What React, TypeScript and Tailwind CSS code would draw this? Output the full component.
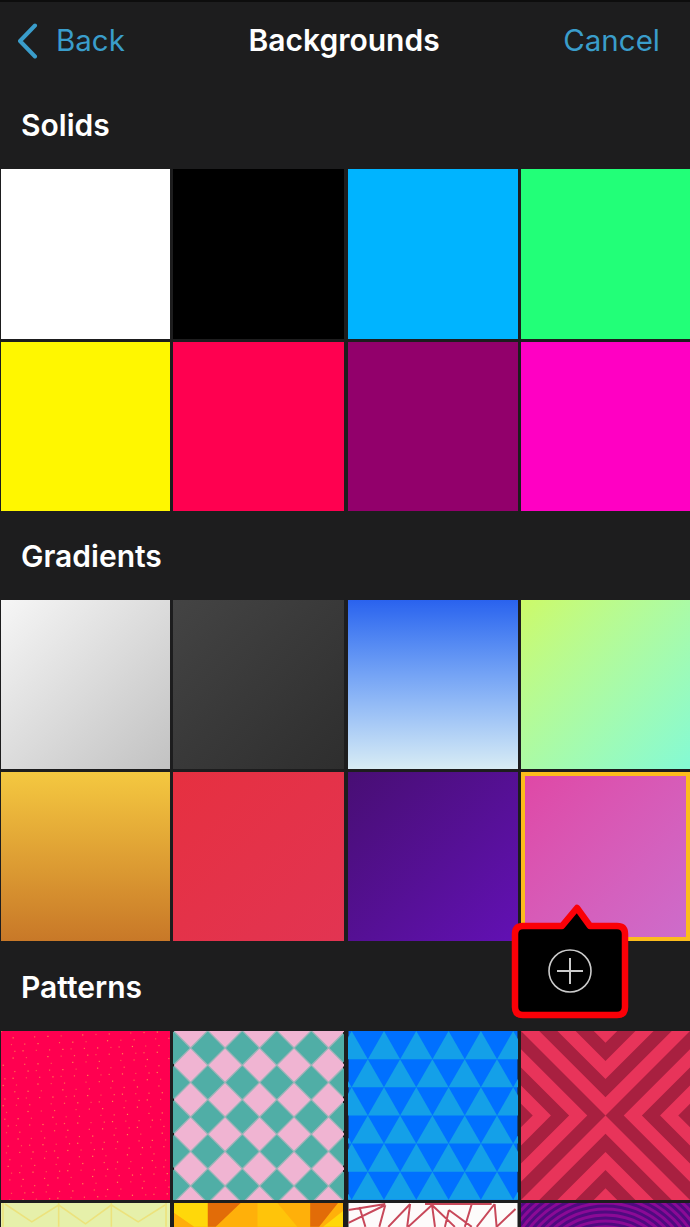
const FONT = "font-['Inter','Liberation_Sans',sans-serif]";

function Dots() {
  // scattered flecks on the red tile
  const dots = [];
  for (let i = 0; i < 300; i++) {
    const x = (i * 0.7549 * 170) % 170;
    const y = (i * 0.5698 * 170) % 170;
    dots.push(<rect key={i} x={x} y={y} width="1.2" height="1.2" fill="#ff9050" opacity={0.55 + (i % 3) * 0.2} />);
  }
  return (
    <svg viewBox="0 0 170 170" className="block w-full h-full">
      <rect width="170" height="170" fill="#ff0050" />
      {dots}
    </svg>
  );
}

function Diamonds() {
  const p = 34.7;
  const cells = [];
  for (let r = -1; r < 7; r++) {
    for (let c = -1; c < 7; c++) {
      const x = c * p - 0.7;
      const y = r * p + 17;
      cells.push(<polygon key={`t${r}${c}`} points={`${x},${y - 16.4} ${x + 16.4},${y} ${x},${y + 16.4} ${x - 16.4},${y}`} fill="#50aea6" />);
      const px = x + p / 2;
      const py = y + p / 2;
      cells.push(<polygon key={`p${r}${c}`} points={`${px},${py - 16.4} ${px + 16.4},${py} ${px},${py + 16.4} ${px - 16.4},${py}`} fill="#f0b4d2" />);
    }
  }
  return (
    <svg viewBox="0 0 170 170" className="block w-full h-full">
      <rect width="170" height="170" fill="#9db4b8" />
      {cells}
    </svg>
  );
}

function Triangles() {
  const w = 32.5;
  const h = 28.3;
  const tris = [];
  for (let r = 0; r < 6; r++) {
    const off = r % 2 === 0 ? 3.2 : 19.4;
    for (let c = -1; c < 7; c++) {
      const x = off + c * w;
      const y = r * h;
      tris.push(<polygon key={`${r}-${c}`} points={`${x},${y} ${x + w / 2},${y + h} ${x - w / 2},${y + h}`} fill="#14a0e8" />);
    }
  }
  return (
    <svg viewBox="0 0 170 170" className="block w-full h-full">
      <rect width="170" height="170" fill="#0070ff" />
      {tris}
    </svg>
  );
}

function Chevrons() {
  const s = 18.3;
  const side = (a: number, b: number) => `${85 - a},85 0,${a} 0,${b} ${85 - b},85 0,${170 - b} 0,${170 - a}`;
  const right = (a: number, b: number) => `${85 + a},85 170,${a} 170,${b} ${85 + b},85 170,${170 - b} 170,${170 - a}`;
  const top = (a: number, b: number) => `85,${85 - a} ${a},0 ${b},0 85,${85 - b} ${170 - b},0 ${170 - a},0`;
  const bottom = (a: number, b: number) => `85,${85 + a} ${a},170 ${b},170 85,${85 + b} ${170 - b},170 ${170 - a},170`;
  const sideBands = [[0, s], [2 * s, 3 * s], [4 * s, 85]];
  const topBands = [[s, 2 * s], [3 * s, 4 * s]];
  return (
    <svg viewBox="0 0 170 170" className="block w-full h-full">
      <rect width="170" height="170" fill="#e8345a" />
      {sideBands.map(([a, b]) => (
        <g key={a} fill="#a82040">
          <polygon points={side(a, b)} />
          <polygon points={right(a, b)} />
        </g>
      ))}
      {topBands.map(([a, b]) => (
        <g key={a} fill="#a82040">
          <polygon points={top(a, b)} />
          <polygon points={bottom(a, b)} />
        </g>
      ))}
    </svg>
  );
}

function ZigZag() {
  return (
    <svg viewBox="0 0 170 170" className="block w-full h-full">
      <rect width="170" height="170" fill="#e6f0aa" />
      <g stroke="#ece27c" strokeWidth="1.6" fill="none">
        <polyline points="4,1 31,19 58,2 85,21 111,2 138,19 165,2" />
        <path d="M58 0V24M111 0V24M166 0V24M2 0V24" />
      </g>
    </svg>
  );
}

function Shards() {
  return (
    <svg viewBox="0 0 170 170" className="block w-full h-full">
      <rect width="170" height="170" fill="#ffb00a" />
      <polygon points="0,0 34,0 34,24 20,24 0,10" fill="#ffd80a" />
      <polygon points="0,10 20,24 0,24" fill="#ffae0a" />
      <polygon points="34,0 67,0 42,24 34,24" fill="#e26c08" />
      <polygon points="84,0 104,0 124,24 84,24" fill="#ffc40a" />
      <polygon points="137,0 165,0 146,24 137,24" fill="#e26c08" />
      <polygon points="170,8 170,24 150,24" fill="#ffd80a" />
    </svg>
  );
}

function Mesh() {
  return (
    <svg viewBox="0 0 170 170" className="block w-full h-full">
      <rect width="170" height="170" fill="#fdfbfb" />
      <path
        d="M0 7L37 1M0 20L37 2M17 24L11 4M37 2L31 24M40 24L62 1M62 1L59 24M84 2L60 24M84 2L87 24M84 2L107 24M101 7L97 24M101 7L124 24M77 1L144 1M124 1L117 24M147 1L129 24M147 1L149 24M149 24L168 6"
        stroke="#c8485a"
        strokeWidth="2"
        fill="none"
      />
    </svg>
  );
}

function Rings() {
  const radii = [];
  for (let r = 40; r < 130; r += 6) radii.push(r);
  return (
    <svg viewBox="0 0 170 170" className="block w-full h-full">
      <rect width="170" height="170" fill="#8a0a96" />
      {radii.map((r) => (
        <circle key={r} cx="85" cy="85" r={r} fill="none" stroke="#500a80" strokeWidth="3" />
      ))}
    </svg>
  );
}

function Tile({ className, children }: { className?: string; children?: React.ReactNode }) {
  return <div className={`h-[169px] overflow-hidden ${className ?? ""}`}>{children}</div>;
}

function Section({ title, labelClass, children }: { title: string; labelClass: string; children: React.ReactNode }) {
  return (
    <section>
      <h2 className={`pl-[21px] text-[30px] leading-[36px] font-semibold text-white ${labelClass}`}>{title}</h2>
      <div className="grid grid-cols-[169px_171px_171px_169px] gap-[3px] pl-px">{children}</div>
    </section>
  );
}

export default function App() {
  return (
    <div className={`relative h-[1227px] w-[690px] overflow-hidden bg-[#1d1d1e] ${FONT}`}>
      <div className="h-[2px] bg-[#0d0d0d]" />
      <header className="flex h-[77px] items-center justify-between pl-[18px] pr-[30px] text-[29.5px]">
        <div className="flex items-center gap-[18px] text-[#3a9dcb]">
          <svg width="20" height="36" viewBox="0 0 20 36" fill="none" stroke="currentColor" strokeWidth="4" strokeLinecap="round" strokeLinejoin="round">
            <path d="M17 2.5L2 18L17 33.5" />
          </svg>
          <span>Back</span>
        </div>
        <span className="text-[30px] font-semibold text-white">Backgrounds</span>
        <span className="text-[#3a9dcb]">Cancel</span>
      </header>

      <Section title="Solids" labelClass="h-[90px] pt-[28px]">
        <Tile className="h-[170px] bg-white" />
        <Tile className="h-[170px] bg-black" />
        <Tile className="ml-px h-[170px] bg-[#00b4ff]" />
        <Tile className="h-[170px] bg-[#22ff78]" />
        <Tile className="bg-[#fff700]" />
        <Tile className="bg-[#ff0050]" />
        <Tile className="ml-px bg-[#92006b]" />
        <Tile className="bg-[#ff00c3]" />
      </Section>

      <Section title="Gradients" labelClass="h-[89px] pt-[27px]">
        <Tile className="bg-gradient-to-br from-[#f6f6f6] to-[#c2c2c2]" />
        <Tile className="bg-gradient-to-br from-[#444444] to-[#2e2e2e]" />
        <Tile className="ml-px bg-gradient-to-b from-[#2a62ee] to-[#d8ecf4]" />
        <Tile className="bg-gradient-to-br from-[#ccfa68] to-[#84fad4]" />
        <Tile className="bg-gradient-to-b from-[#f4c840] to-[#c87828]" />
        <Tile className="bg-gradient-to-br from-[#e63040] to-[#e23452]" />
        <Tile className="ml-px bg-gradient-to-br from-[#480e74] to-[#6210b4]" />
        <Tile className="border-[4px] border-[#fcbc1c] bg-gradient-to-br from-[#df48a6] to-[#cd6ccb]" />
      </Section>

      <Section title="Patterns" labelClass="h-[90px] pt-[28px]">
        <Tile><Dots /></Tile>
        <Tile><Diamonds /></Tile>
        <Tile className="ml-px"><Triangles /></Tile>
        <Tile><Chevrons /></Tile>
        <Tile><ZigZag /></Tile>
        <Tile><Shards /></Tile>
        <Tile className="ml-px"><Mesh /></Tile>
        <Tile><Rings /></Tile>
      </Section>

      {/* add button with the red callout over it */}
      <svg className="absolute left-[505px] top-[895px]" width="130" height="130" viewBox="505 895 130 130">
        <path
          d="M523 926H562L577 908L590 926H617Q625 926 625 934V1007Q625 1015 617 1015H523Q515 1015 515 1007V934Q515 926 523 926Z"
          fill="#000"
          stroke="#fb0007"
          strokeWidth="6.5"
          strokeLinejoin="round"
        />
        <circle cx="570" cy="971" r="21" fill="none" stroke="#cbcbcb" strokeWidth="1.6" />
        <path d="M557 971H583M570 958V984" stroke="#cbcbcb" strokeWidth="2" />
      </svg>
    </div>
  );
}
